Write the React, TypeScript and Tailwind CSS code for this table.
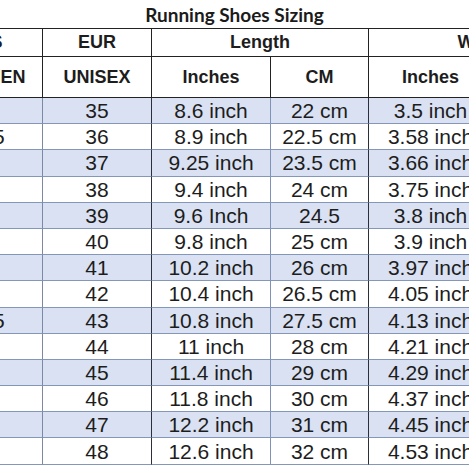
import React from 'react';

type Row = [string, string, string, string, string, string];

// US / EUR / length inch / length cm / width inch / width cm
const rows: Row[] = [
  ['4', '35', '8.6 inch', '22 cm', '3.5 inch', '8.9 cm'],
  ['4.5', '36', '8.9 inch', '22.5 cm', '3.58 inch', '9.1 cm'],
  ['5', '37', '9.25 inch', '23.5 cm', '3.66 inch', '9.3 cm'],
  ['6', '38', '9.4 inch', '24 cm', '3.75 inch', '9.5 cm'],
  ['7', '39', '9.6 Inch', '24.5', '3.8 inch', '9.7 cm'],
  ['7', '40', '9.8 inch', '25 cm', '3.9 inch', '9.9 cm'],
  ['8', '41', '10.2 inch', '26 cm', '3.97 inch', '10.1 cm'],
  ['8', '42', '10.4 inch', '26.5 cm', '4.05 inch', '10.3 cm'],
  ['9.5', '43', '10.8 inch', '27.5 cm', '4.13 inch', '10.5 cm'],
  ['9', '44', '11 inch', '28 cm', '4.21 inch', '10.7 cm'],
  ['9', '45', '11.4 inch', '29 cm', '4.29 inch', '10.9 cm'],
  ['9', '46', '11.8 inch', '30 cm', '4.37 inch', '11.1 cm'],
  ['9', '47', '12.2 inch', '31 cm', '4.45 inch', '11.3 cm'],
  ['9', '48', '12.6 inch', '32 cm', '4.53 inch', '11.5 cm'],
];

// right-edge colour of each body column
const bodyRight = [
  'border-r-[#7c89a3]',
  'border-r-[#2b2f3a]',
  'border-r-[#7f93b8]',
  'border-r-[#2b2f3a]',
  'border-r-[#7f93b8]',
  'border-r-[#2b2f3a]',
];

const App = () => {
  return (
    <div className="w-[469px] h-[469px] overflow-hidden bg-white font-['Liberation_Sans',Arial,sans-serif] text-[#1d1d1d]">
      {/* Title */}
      <div className="h-[28px] flex items-center justify-center pt-[2px]">
        <h1 className="font-['Lato',sans-serif] font-bold text-[19px] text-[#1b1b1b]">
          Running Shoes Sizing
        </h1>
      </div>

      <table className="table-fixed border-separate border-spacing-0 ml-[-62px] w-[659px]">
        <colgroup>
          <col className="w-[105px]" />
          <col className="w-[109px]" />
          <col className="w-[119px]" />
          <col className="w-[98px]" />
          <col className="w-[124px]" />
          <col className="w-[104px]" />
        </colgroup>
        <thead className="font-bold text-[18px]">
          <tr className="h-[24px]">
            <th className="border-t border-r border-b border-[#222] font-bold p-0">US</th>
            <th className="border-t border-r border-b border-[#222] font-bold p-0">EUR</th>
            <th colSpan={2} className="border-t border-r border-b border-[#222] font-bold p-0">
              Length
            </th>
            <th colSpan={2} className="border-t border-r border-b border-[#222] font-bold p-0">
              Width
            </th>
          </tr>
          <tr className="h-[41px]">
            <th className="border-r border-b border-[#222] font-bold p-0">WOMEN</th>
            <th className="border-r border-b border-[#222] font-bold p-0">UNISEX</th>
            <th className="border-r border-b border-[#222] font-bold p-0">Inches</th>
            <th className="border-r border-b border-[#222] font-bold p-0">CM</th>
            <th className="border-r border-b border-[#222] font-bold p-0">Inches</th>
            <th className="border-r border-b border-[#222] font-bold p-0">CM</th>
          </tr>
        </thead>
        <tbody className="text-[21px]">
          {rows.map((row, i) => (
            <tr key={row[1]} className={`h-[26.2px] ${i % 2 === 0 ? 'bg-[#d9e1f2]' : 'bg-white'}`}>
              {row.map((cell, j) => (
                <td
                  key={j}
                  className={`p-0 text-center leading-none border-b border-r border-b-[#8497b9] ${bodyRight[j]}`}
                >
                  {cell}
                </td>
              ))}
            </tr>
          ))}
        </tbody>
      </table>
    </div>
  );
};

export default App;
